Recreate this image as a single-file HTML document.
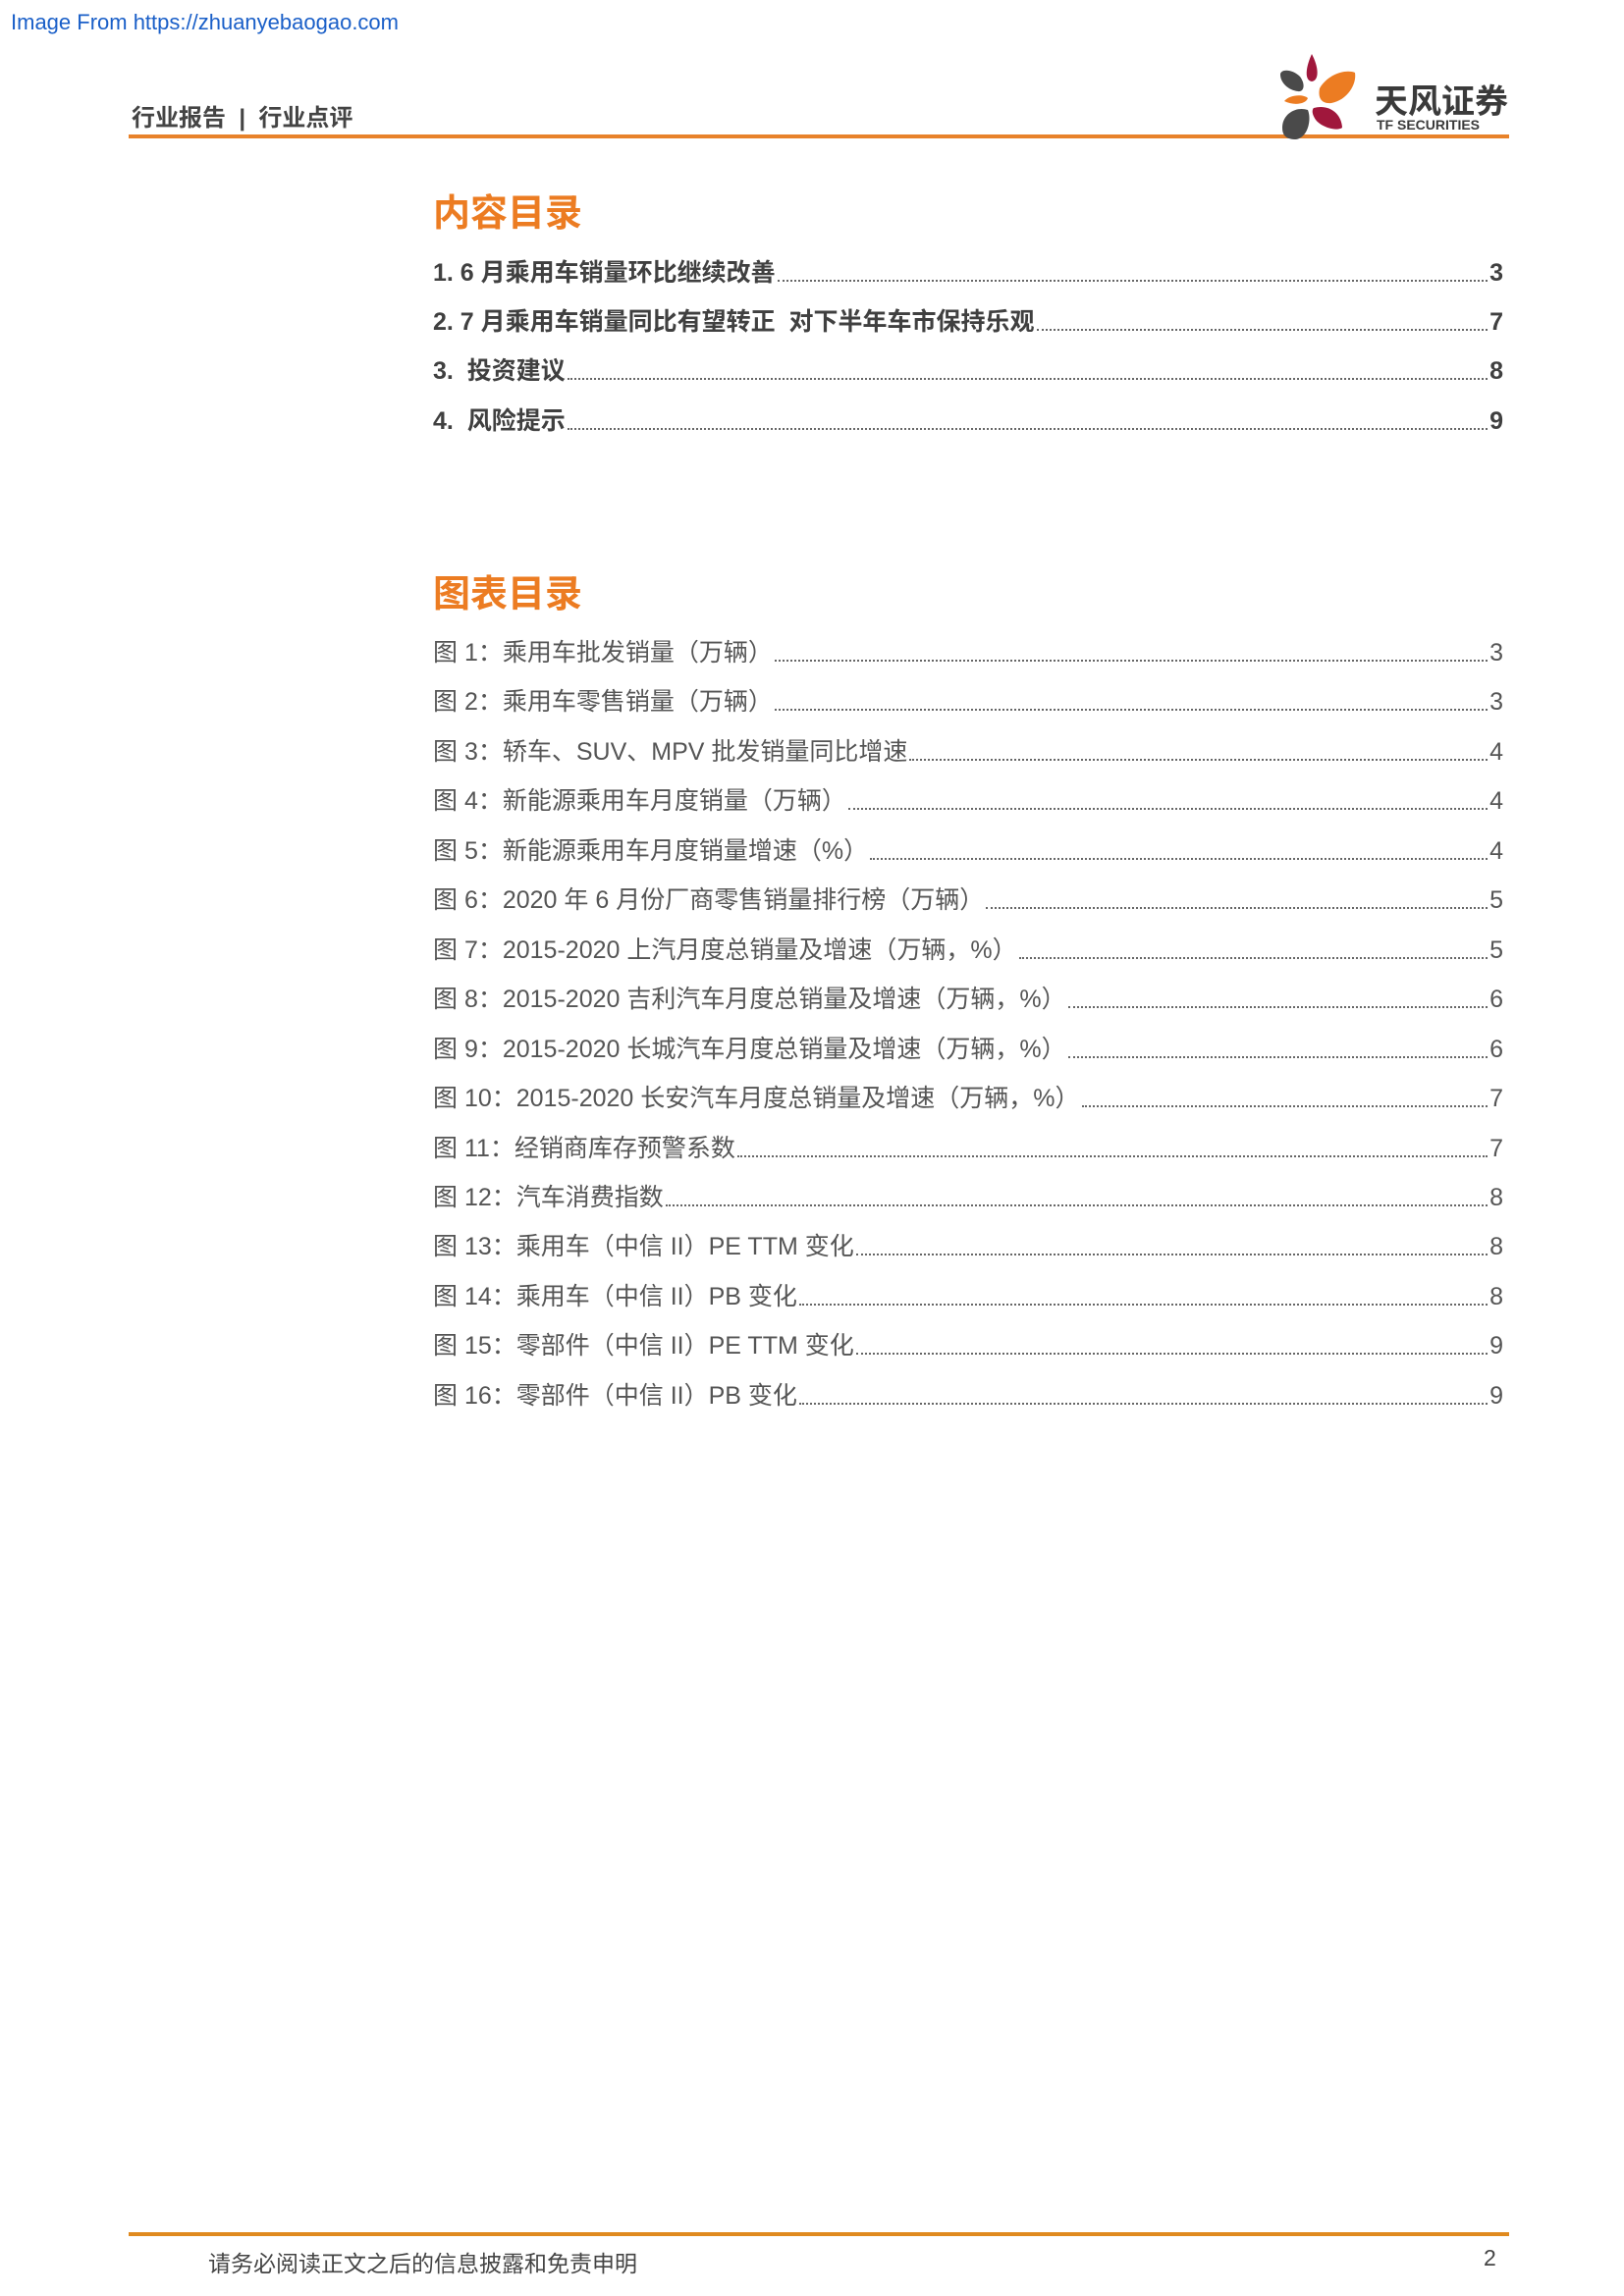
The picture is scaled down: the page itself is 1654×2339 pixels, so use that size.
<!DOCTYPE html>
<html><head><meta charset="utf-8"><style>
*{margin:0;padding:0;box-sizing:border-box}
body{width:1654px;height:2339px;background:#fff;position:relative;overflow:hidden;font-family:"Liberation Sans","Noto Sans CJK SC",sans-serif;color:#444}
.abs{position:absolute;white-space:nowrap}
.row{position:absolute;left:441px;width:1090px;display:flex;align-items:flex-end;height:34px;line-height:34px;white-space:nowrap}
.row .d{flex:1;border-bottom:2px dotted #666;margin:0 2px 8px 2px;height:1px}
.t1{font-size:25px;font-weight:bold;color:#404040}
.t2{font-size:25px;color:#555}
h2{position:absolute;left:441px;font-size:38px;color:#ec7c22;font-weight:bold;line-height:46px}
</style></head><body>
<div class="abs" style="left:11px;top:10px;font-size:22px;color:#1a5fc8">Image From https://zhuanyebaogao.com</div>
<div class="abs" style="left:134px;top:100px;font-size:24px;font-weight:bold;color:#444">行业报告 &nbsp;|&nbsp; 行业点评</div>
<div class="abs" style="left:131px;top:137px;width:1406px;height:4px;background:#e8822a"></div>
<svg class="abs" style="left:1300px;top:50px" width="90" height="96" viewBox="0 0 90 96">
<path d="M36 5 C30 18 28 32 36 33 C44 32 43 18 36 5Z" fill="#a0173c"/>
<path d="M4 26 C4 20 16 20 24 28 C30 36 28 44 22 43 C12 42 4 34 4 26Z" fill="#4a4a4a"/>
<path d="M44 40 C52 26 70 20 80 24 C82 36 72 52 56 55 C46 56 42 50 44 40Z" fill="#ec7c22"/>
<path d="M8 53 C14 46 28 46 32 50 C30 56 18 58 8 53Z" fill="#ec7c22"/>
<path d="M6 80 C6 66 20 58 32 62 C36 72 32 90 20 92 C10 92 6 88 6 80Z" fill="#4a4a4a"/>
<path d="M38 60 C52 56 66 64 67 80 C62 84 46 80 40 72 C36 66 36 62 38 60Z" fill="#a0173c"/>
</svg>
<div class="abs" style="left:1400px;top:76px;font-size:34px;font-weight:bold;color:#3a3a3a">天风证券</div>
<div class="abs" style="left:1402px;top:119px;font-size:14px;font-weight:bold;color:#3a3a3a">TF SECURITIES</div>

<h2 style="top:195px">内容目录</h2>
<div class="row t1" style="top:261px"><span>1. 6 月乘用车销量环比继续改善</span><span class="d"></span><span>3</span></div>
<div class="row t1" style="top:311px"><span>2. 7 月乘用车销量同比有望转正&nbsp; 对下半年车市保持乐观</span><span class="d"></span><span>7</span></div>
<div class="row t1" style="top:361px"><span>3.&nbsp; 投资建议</span><span class="d"></span><span>8</span></div>
<div class="row t1" style="top:412px"><span>4.&nbsp; 风险提示</span><span class="d"></span><span>9</span></div>

<h2 style="top:583px">图表目录</h2>
<div class="row t2" style="top:648px"><span>图 1：乘用车批发销量（万辆）</span><span class="d"></span><span>3</span></div>
<div class="row t2" style="top:698px"><span>图 2：乘用车零售销量（万辆）</span><span class="d"></span><span>3</span></div>
<div class="row t2" style="top:749px"><span>图 3：轿车、SUV、MPV 批发销量同比增速</span><span class="d"></span><span>4</span></div>
<div class="row t2" style="top:799px"><span>图 4：新能源乘用车月度销量（万辆）</span><span class="d"></span><span>4</span></div>
<div class="row t2" style="top:850px"><span>图 5：新能源乘用车月度销量增速（%）</span><span class="d"></span><span>4</span></div>
<div class="row t2" style="top:900px"><span>图 6：2020 年 6 月份厂商零售销量排行榜（万辆）</span><span class="d"></span><span>5</span></div>
<div class="row t2" style="top:951px"><span>图 7：2015-2020 上汽月度总销量及增速（万辆，%）</span><span class="d"></span><span>5</span></div>
<div class="row t2" style="top:1001px"><span>图 8：2015-2020 吉利汽车月度总销量及增速（万辆，%）</span><span class="d"></span><span>6</span></div>
<div class="row t2" style="top:1052px"><span>图 9：2015-2020 长城汽车月度总销量及增速（万辆，%）</span><span class="d"></span><span>6</span></div>
<div class="row t2" style="top:1102px"><span>图 10：2015-2020 长安汽车月度总销量及增速（万辆，%）</span><span class="d"></span><span>7</span></div>
<div class="row t2" style="top:1153px"><span>图 11：经销商库存预警系数</span><span class="d"></span><span>7</span></div>
<div class="row t2" style="top:1203px"><span>图 12：汽车消费指数</span><span class="d"></span><span>8</span></div>
<div class="row t2" style="top:1253px"><span>图 13：乘用车（中信 II）PE TTM 变化</span><span class="d"></span><span>8</span></div>
<div class="row t2" style="top:1304px"><span>图 14：乘用车（中信 II）PB 变化</span><span class="d"></span><span>8</span></div>
<div class="row t2" style="top:1354px"><span>图 15：零部件（中信 II）PE TTM 变化</span><span class="d"></span><span>9</span></div>
<div class="row t2" style="top:1405px"><span>图 16：零部件（中信 II）PB 变化</span><span class="d"></span><span>9</span></div>

<div class="abs" style="left:131px;top:2274px;width:1406px;height:4px;background:#e08a1e"></div>
<div class="abs" style="left:212px;top:2287px;font-size:23px;color:#444">请务必阅读正文之后的信息披露和免责申明</div>
<div class="abs" style="left:1511px;top:2287px;font-size:23px;color:#444">2</div>
</body></html>
